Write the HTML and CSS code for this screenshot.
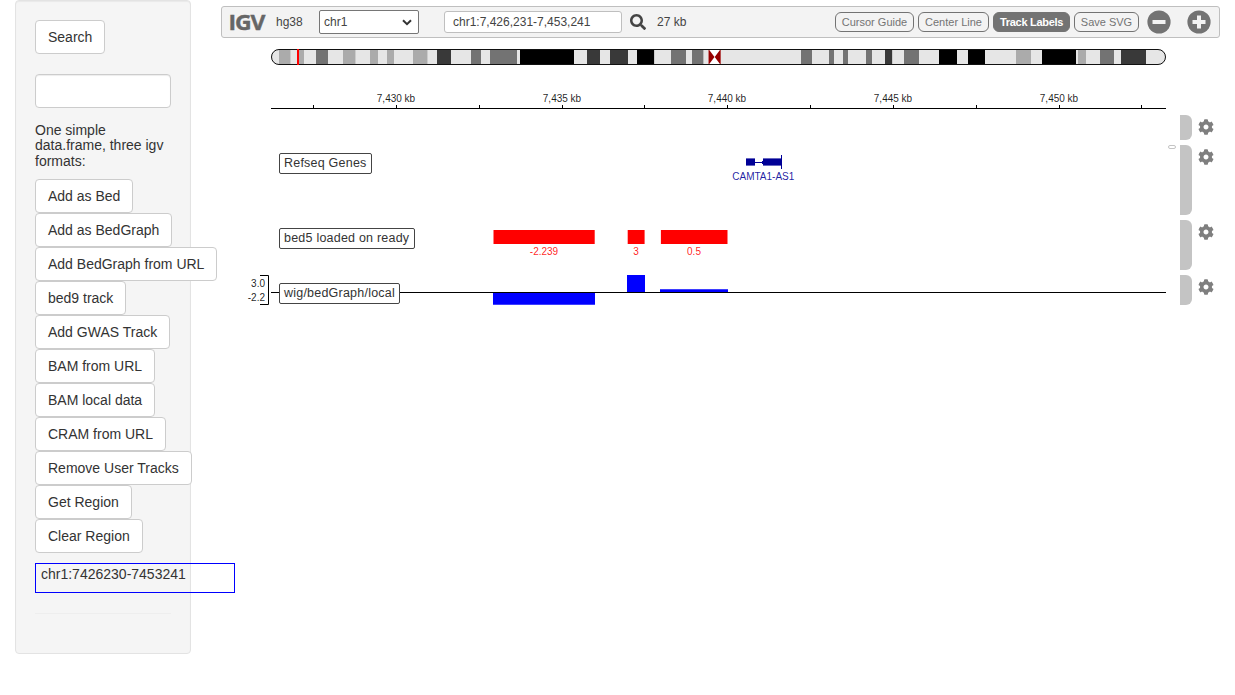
FILE: index.html
```html
<!DOCTYPE html>
<html lang="en">
<head>
<meta charset="utf-8">
<title>IGV</title>
<link rel="stylesheet" href="styles.css">
</head>
<body>
<svg class="defs" aria-hidden="true">
  <symbol id="cog" viewBox="0 0 512 512"><path d="M487.4 315.7l-42.6-24.6c4.3-23.2 4.3-47 0-70.2l42.6-24.6c4.9-2.8 7.1-8.6 5.5-14-11.1-35.6-30-67.8-54.7-94.6-3.8-4.1-10-5.1-14.8-2.3L380.8 110c-17.9-15.4-38.5-27.3-60.8-35.1V25.8c0-5.6-3.9-10.5-9.4-11.7-36.7-8.2-74.3-7.8-109.2 0-5.5 1.2-9.4 6.1-9.4 11.7V75c-22.2 7.9-42.8 19.8-60.8 35.1L88.7 85.5c-4.9-2.8-11-1.9-14.8 2.3-24.7 26.7-43.6 58.9-54.7 94.6-1.7 5.4.6 11.2 5.5 14L67.3 221c-4.3 23.2-4.3 47 0 70.2l-42.6 24.6c-4.9 2.8-7.1 8.6-5.5 14 11.1 35.6 30 67.8 54.7 94.6 3.8 4.1 10 5.1 14.8 2.3l42.6-24.6c17.9 15.4 38.5 27.3 60.8 35.1v49.2c0 5.6 3.9 10.5 9.4 11.7 36.7 8.2 74.3 7.8 109.2 0 5.5-1.2 9.4-6.1 9.4-11.7v-49.2c22.2-7.9 42.8-19.8 60.8-35.1l42.6 24.6c4.9 2.8 11 1.9 14.8-2.3 24.7-26.7 43.6-58.9 54.7-94.6 1.5-5.5-.7-11.3-5.6-14.1zM256 336c-44.1 0-80-35.9-80-80s35.9-80 80-80 80 35.9 80 80-35.9 80-80 80z"/></symbol>
</svg>
<div class="page">
  <aside class="sidebar">
    <button class="btn">Search</button>
    <input class="field" type="text" aria-label="Region">
    <h5 class="heading">One simple data.frame, three igv formats:</h5>
    <div class="actions">
      <button class="btn">Add as Bed</button>
      <button class="btn">Add as BedGraph</button>
      <button class="btn">Add BedGraph from URL</button>
      <button class="btn">bed9 track</button>
      <button class="btn">Add GWAS Track</button>
      <button class="btn">BAM from URL</button>
      <button class="btn">BAM local data</button>
      <button class="btn">CRAM from URL</button>
      <button class="btn">Remove User Tracks</button>
      <button class="btn">Get Region</button>
      <button class="btn">Clear Region</button>
    </div>
    <div class="region">chr1:7426230-7453241</div>
    <hr class="rule">
  </aside>

  <main class="igv">
    <nav class="navbar">
      <svg class="logo" width="36" height="30"><text x="-1.5" y="23" textLength="36" lengthAdjust="spacingAndGlyphs">IGV</text></svg>
      <span class="genome">hg38</span>
      <div class="chrom">chr1
        <svg class="chevron" width="10" height="7" viewBox="0 0 10 7"><path d="M1 1.2l4 4 4-4"/></svg>
      </div>
      <div class="locus">chr1:7,426,231-7,453,241</div>
      <svg class="search" width="16" height="16" viewBox="0 0 512 512"><path d="M505 442.7L405.3 343c-4.5-4.5-10.6-7-17-7H372c27.6-35.3 44-79.7 44-128C416 93.1 322.9 0 208 0S0 93.1 0 208s93.1 208 208 208c48.3 0 92.7-16.4 128-44v16.3c0 6.4 2.5 12.5 7 17l99.7 99.7c9.4 9.4 24.6 9.4 33.9 0l28.3-28.3c9.4-9.4 9.4-24.6.1-34zM208 336c-70.7 0-128-57.2-128-128 0-70.7 57.2-128 128-128 70.7 0 128 57.2 128 128 0 70.7-57.2 128-128 128z"/></svg>
      <span class="size">27 kb</span>
      <div class="toggles">
        <span class="toggle cursor-guide">Cursor Guide</span>
        <span class="toggle center-line">Center Line</span>
        <span class="toggle track-labels">Track Labels</span>
        <span class="toggle save-svg">Save SVG</span>
      </div>
      <div class="zoom">
        <svg width="24" height="24"><circle cx="12" cy="12" r="11.6"/><path d="M5.5 12h13"/></svg>
        <svg width="24" height="24"><circle cx="12" cy="12" r="11.6"/><path d="M5.5 12h13M12 5.5v13"/></svg>
      </div>
    </nav>

    <svg class="ideogram" width="895" height="16" viewBox="271 49 895 16">
      <clipPath id="chr"><rect x="271" y="49" width="895" height="16" rx="8"/></clipPath>
      <g clip-path="url(#chr)">
        <path fill="#e6e6e6" d="M271 49h895v16H271z"/>
        <path fill="#ababab" d="M279 49h11v16h-11zM297 49h7v16h-7zM343 49h12v16h-12zM370 49h8v16h-8zM387 49h7v16h-7zM413 49h14v16h-14zM1016 49h15v16h-15zM1078 49h8v16h-8z"/>
        <path fill="#737373" d="M316 49h12v16h-12zM471 49h10v16h-10zM490 49h27v16h-27zM671 49h15v16h-15zM692 49h11v16h-11zM801 49h11v16h-11zM829 49h5v16h-5zM843 49h5v16h-5zM866 49h6v16h-6zM904 49h15v16h-15zM1100 49h14v16h-14z"/>
        <path fill="#393939" d="M437 49h14v16h-14zM587 49h13v16h-13zM610 49h18v16h-18zM885 49h7v16h-7zM1121 49h25v16h-25z"/>
        <path fill="#000" d="M520 49h54v16h-54zM637 49h17v16h-17zM939 49h18v16h-18zM968 49h17v16h-17zM1042 49h34v16h-34z"/>
        <path fill="#bbb" d="M290 49h.6v16h-.6zM355 49h.6v16h-.6zM427 49h.6v16h-.6zM654 49h.6v16h-.6zM703 49h1v16h-1zM892 49h.6v16h-.6z"/>
        <path fill="#fff" d="M708 49h13v16h-13z"/>
        <path fill="#960000" d="M708.5 49l6 8-6 8zM720.7 49l-6 8 6 8z"/>
      </g>
      <rect x="271.5" y="49.5" width="894" height="15" rx="7.5" fill="none" stroke="#111"/>
      <path fill="red" d="M297 49h2v16h-2z"/>
    </svg>

    <svg class="ruler" width="895" height="20" viewBox="271 90 895 20">
      <path fill="#000" d="M271 108h895v1H271zM313 105h1v3h-1zM396 105h1v3h-1zM479 105h1v3h-1zM562 105h1v3h-1zM644 105h1v3h-1zM727 105h1v3h-1zM810 105h1v3h-1zM893 105h1v3h-1zM976 105h1v3h-1zM1059 105h1v3h-1zM1141 105h1v3h-1z"/>
      <text x="396" y="102">7,430 kb</text><text x="562" y="102">7,435 kb</text><text x="727" y="102">7,440 kb</text><text x="893" y="102">7,445 kb</text><text x="1059" y="102">7,450 kb</text>
    </svg>

    <div class="tracks">
      <div class="track sequence">
        <div class="axis"></div><div class="view"></div><div class="scroll"></div><div class="drag"></div>
        <svg class="gear"><use href="#cog"/></svg>
      </div>
      <div class="track genes">
        <div class="axis"></div>
        <div class="view">
          <svg width="895" height="70" viewBox="271 145 895 70">
            <g fill="#000096"><path opacity=".6" d="M746 158h9v8h-9zM763 158h18v8h-18z"/><path d="M746 159h9v6h-9zM763 159h18v6h-18zM755 162h8v1h-8zM762 161h1v3h-1zM781 155h1v14h-1z"/>
            <text x="763.3" y="180">CAMTA1-AS1</text></g>
          </svg>
          <span class="label">Refseq Genes</span>
        </div>
        <div class="scroll"><i class="thumb"></i></div><div class="drag"></div>
        <svg class="gear"><use href="#cog"/></svg>
      </div>
      <div class="track bed">
        <div class="axis"></div>
        <div class="view">
          <svg width="895" height="50" viewBox="271 220 895 50">
            <g fill="red"><path d="M493.5 230h101.2v14H493.5zM627.7 230h16.9v14h-16.9zM660.9 230h66.6v14h-66.6z"/>
            <text x="544" y="255">-2.239</text><text x="636" y="255">3</text><text x="694" y="255">0.5</text></g>
          </svg>
          <span class="label">bed5 loaded on ready</span>
        </div>
        <div class="scroll"></div><div class="drag"></div>
        <svg class="gear"><use href="#cog"/></svg>
      </div>
      <div class="track wig">
        <div class="axis">
          <svg width="50" height="30" viewBox="221 275 50 30">
            <path d="M260 275.5h8.5v29h-8.5" fill="none" stroke="#000"/>
            <text class="end" x="265" y="287">3.0</text><text class="end" x="265" y="301">-2.2</text>
          </svg>
        </div>
        <div class="view">
          <svg width="895" height="30" viewBox="271 275 895 30">
            <path fill="#00f" d="M493 293h102v11.7H493zM627 275h18v17h-18zM660 289.2h68v2.8h-68z"/>
            <path fill="#000" d="M271 292h895v1H271z"/>
          </svg>
          <span class="label">wig/bedGraph/local</span>
        </div>
        <div class="scroll"></div><div class="drag"></div>
        <svg class="gear"><use href="#cog"/></svg>
      </div>
    </div>
  </main>
</div>
</body>
</html>
```

FILE: styles.css
```css
* { box-sizing: border-box; }
body {
  margin: 0;
  background: #fff;
  color: #333;
  font: 14px/20px "Liberation Sans", Arial, sans-serif;
  overflow: hidden;
}
svg { display: block; flex: none; }
svg text { font-size: 10px; text-anchor: middle; fill-opacity: .88; }
svg text.end { text-anchor: end; }
.defs { display: none; }
.page { display: flex; align-items: flex-start; gap: 30px; padding-left: 15px; }

.sidebar {
  flex: none;
  width: 176px;
  height: 654px;
  padding: 19px;
  background: #f5f5f5;
  border: 1px solid #e3e3e3;
  border-radius: 4px;
  box-shadow: inset 0 1px 1px rgba(0, 0, 0, .05);
}
.btn {
  display: block;
  height: 34px;
  padding: 6px 12px;
  font: inherit;
  color: #333;
  white-space: nowrap;
  background: #fff;
  border: 1px solid #ccc;
  border-radius: 4px;
}
.field {
  display: block;
  width: 136px;
  height: 34px;
  margin: 20px 0 15px;
  padding: 6px 12px;
  border: 1px solid #ccc;
  border-radius: 4px;
  box-shadow: inset 0 1px 1px rgba(0, 0, 0, .075);
}
.heading { margin: 0 0 10px; font-size: 14px; font-weight: 400; line-height: 1.1; }
.actions { display: flex; flex-direction: column; align-items: flex-start; }
.region {
  width: 200px;
  height: 30px;
  margin-top: 10px;
  padding: 0 5px;
  border: 1px solid #00f;
}
.rule { margin: 20px 0; border: 0; border-top: 1px solid #eee; }

.igv { flex: none; width: 999px; padding-top: 6px; }
.navbar {
  display: flex;
  align-items: center;
  height: 32px;
  padding: 0 8px;
  background: #f3f3f3;
  border: 1px solid #bfbfbf;
  border-radius: 3px;
  color: #444;
  font-size: 12px;
}
.logo { overflow: visible; }
.logo text {
  font: 700 21.5px "Open Sans", sans-serif;
  letter-spacing: -1px;
  fill: #666;
  fill-opacity: 1;
  stroke: #666;
  stroke-width: .4;
  text-anchor: start;
}
.genome { width: 43px; margin-left: 10px; }
.chrom {
  display: flex;
  align-items: center;
  justify-content: space-between;
  width: 100px;
  height: 24px;
  padding: 0 6px 0 4px;
  background: #fff;
  border: 1px solid #767676;
  border-radius: 2px;
}
.chevron path { fill: none; stroke: #333; stroke-width: 2; }
.locus {
  width: 178px;
  height: 22px;
  margin-left: 25px;
  padding-left: 8px;
  background: #fff;
  border: 1px solid #bfbfbf;
  border-radius: 3px;
}
.search { margin: 0 11px 0 8px; fill: #444; }
.toggles { display: flex; gap: 4px; margin-left: auto; }
.toggle {
  height: 20px;
  border: 1px solid #737373;
  border-radius: 6px;
  color: #737373;
  font-size: 11px;
  line-height: 18px;
  text-align: center;
}
.cursor-guide { width: 79px; }
.center-line { width: 71px; }
.track-labels {
  width: 77px;
  background: #737373;
  color: #fff;
  font-weight: 700;
  letter-spacing: -.3px;
}
.save-svg { width: 65px; }
.zoom { display: flex; gap: 16px; margin-left: 8px; }
.zoom circle { fill: #737373; }
.zoom path { stroke: #f3f3f3; stroke-width: 4; }

.ideogram { margin: 11px 0 0 50px; }
.ruler { margin: 25px 0 5px 50px; }
.tracks { display: flex; flex-direction: column; gap: 5px; }
.track { display: grid; grid-template-columns: 50px 895px 14px 12px 28px; }
.sequence { height: 25px; }
.genes { height: 70px; }
.bed { height: 50px; }
.wig { height: 30px; }
.view { position: relative; }
.label {
  position: absolute;
  top: 8px;
  left: 8px;
  height: 21px;
  padding: 0 4px;
  border: 1px solid #444;
  border-radius: 2px;
  background: #fff;
  font-size: 12.5px;
  letter-spacing: .22px;
  line-height: 18px;
  white-space: nowrap;
}
.genes .label { width: 93px; }
.bed .label { width: 136px; }
.wig .label { width: 121px; }
.thumb {
  display: block;
  width: 8px;
  height: 4px;
  margin-left: 2px;
  border: 1px solid #c4c4c4;
  border-radius: 2px;
}
.drag { background: #c4c4c4; border-radius: 0 6px 6px 0; }
.gear { width: 16px; height: 16px; margin: 4px 0 0 6px; fill: #7f7f7f; }
```
